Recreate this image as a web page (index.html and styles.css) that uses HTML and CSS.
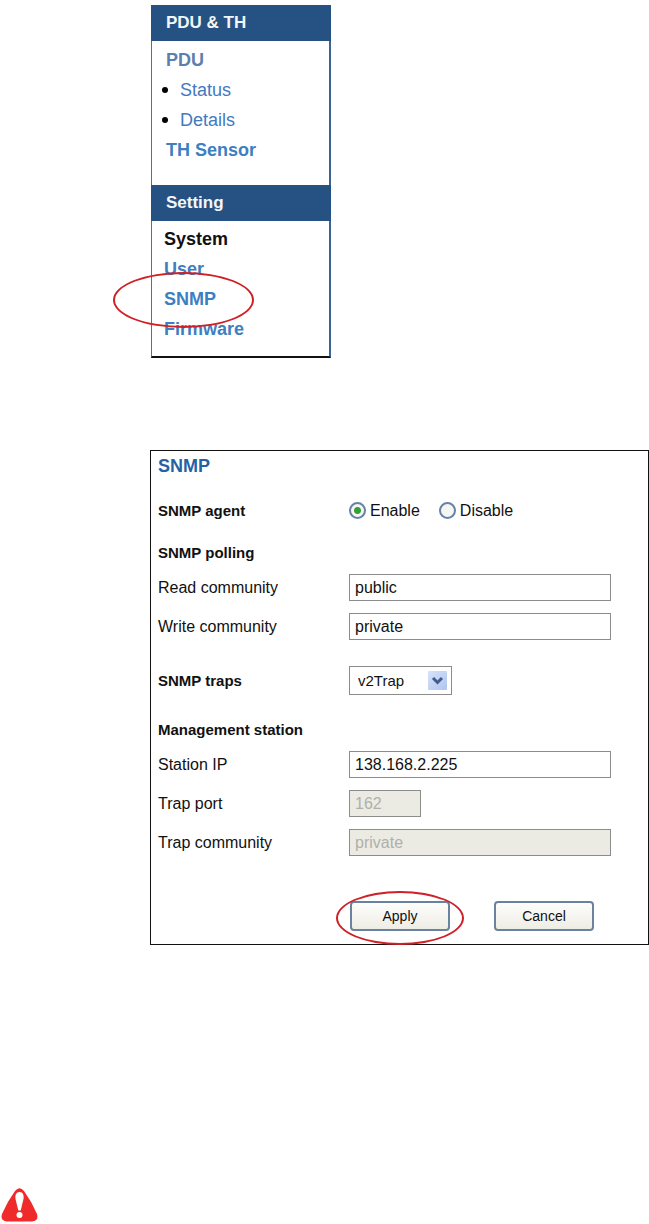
FILE: index.html
```html
<!DOCTYPE html>
<html lang="en">
<head>
    <meta charset="UTF-8">
    <meta name="viewport" content="width=device-width, initial-scale=1.0">
    <title>SNMP Setting</title>
    <link rel="stylesheet" href="styles.css">
</head>
<body>
    <nav class="menu">
        <h2>PDU &amp; TH</h2>
        <ul class="menu-pdu">
            <li><a class="muted" href="#pdu">PDU</a></li>
            <li class="sub"><a href="#status">Status</a></li>
            <li class="sub"><a href="#details">Details</a></li>
            <li><a href="#th">TH Sensor</a></li>
        </ul>
        <h2>Setting</h2>
        <ul class="menu-setting">
            <li><a class="current" href="#system">System</a></li>
            <li><a href="#user">User</a></li>
            <li class="marked">
                <a href="#snmp">SNMP</a>
                <span class="ring"></span>
            </li>
            <li><a href="#firmware">Firmware</a></li>
        </ul>
    </nav>

    <form class="panel">
        <h1>SNMP</h1>
        <div class="row agent">
            <span class="name" id="agentLabel">SNMP agent</span>
            <div class="radios" role="radiogroup" aria-labelledby="agentLabel">
                <label><input type="radio" name="agent" value="enable" checked>Enable</label>
                <label><input type="radio" name="agent" value="disable">Disable</label>
            </div>
        </div>

        <h3 class="polling">SNMP polling</h3>
        <div class="row">
            <label for="read">Read community</label>
            <input type="text" id="read" name="read" value="public">
        </div>
        <div class="row">
            <label for="write">Write community</label>
            <input type="text" id="write" name="write" value="private">
        </div>

        <div class="row traps">
            <label class="name" for="traps">SNMP traps</label>
            <div class="select">
                <select id="traps" name="traps">
                    <option>v1Trap</option>
                    <option selected>v2Trap</option>
                </select>
                <svg viewBox="0 0 19 19" aria-hidden="true">
                    <defs>
                        <linearGradient id="arrowFill" x1="0" y1="0" x2="1" y2="1">
                            <stop offset="0" stop-color="#d6e2fa"/>
                            <stop offset="1" stop-color="#b0c5ee"/>
                        </linearGradient>
                    </defs>
                    <rect width="19" height="19" rx="1" fill="url(#arrowFill)"/>
                    <path d="M5 7l4.500 4.500L14 7" fill="none" stroke="#435a8c" stroke-width="3"/>
                </svg>
            </div>
        </div>

        <h3 class="station">Management station</h3>
        <div class="row">
            <label for="ip">Station IP</label>
            <input type="text" id="ip" name="ip" value="138.168.2.225">
        </div>
        <div class="row">
            <label for="port">Trap port</label>
            <input type="text" class="short" id="port" name="port" value="162" disabled>
        </div>
        <div class="row">
            <label for="community">Trap community</label>
            <input type="text" id="community" name="community" value="private" disabled>
        </div>

        <div class="buttons">
            <div class="marked">
                <button type="submit">Apply</button>
                <span class="ring"></span>
            </div>
            <button type="reset">Cancel</button>
        </div>
    </form>

    <svg class="warning" viewBox="0 0 37 34" role="img" aria-label="Warning">
        <path d="M14 3Q18.500-2.500 23 3Q31 14 36 26Q38 33 31 33.500H6Q-1 33 1 26Q6 14 14 3Z" fill="#ee2a2b"/>
        <path d="M18.500 4C22 4 23 7 22.500 11L19.700 22.500H17.300L14.500 11C14 7 15 4 18.500 4Z" fill="#fff"/>
        <circle cx="18.500" cy="27" r="3" fill="#fff"/>
    </svg>
</body>
</html>
```
FILE: styles.css
```css
* {
    box-sizing: border-box;
}
body {
    margin: 0;
    padding-top: 5px;
    background-color: #fff;
    color: #111;
    font-family: "Liberation Sans", Arial, sans-serif;
    font-size: 16px;
}
h1, h2, h3, ul {
    margin: 0;
    padding: 0;
}

/* side menu */
.menu {
    width: 180px;
    margin-left: 151px;
    border-left: 1px solid #4a72a3;
    border-right: 2px solid #3a6496;
    border-bottom: 2px solid #111;
}
.menu h2 {
    margin: 0 -2px 0 -1px;
    padding-left: 15px;
    background-color: #255283;
    color: #f4f6f8;
    font-size: 17px;
    line-height: 36px;
}
.menu ul {
    list-style: none;
    font-size: 18px;
    font-weight: bold;
    line-height: 30px;
}
.menu .menu-pdu {
    padding: 4px 0 20px 14px;
}
.menu .menu-setting {
    padding: 3px 0 12px 12px;
}
.menu a {
    color: #3c80c2;
    text-decoration: none;
}
.menu a.muted {
    color: #5c7eb0;
}
.menu a.current {
    color: #111;
}
.menu .sub {
    display: flex;
    align-items: center;
    gap: 12px;
    margin-left: -4px;
    font-weight: normal;
}
.menu .sub::before {
    content: "";
    width: 6px;
    height: 6px;
    border-radius: 50%;
    background-color: #000;
}
.menu .sub a {
    color: #4479be;
}

/* red outline round an item */
.marked {
    position: relative;
}
.ring {
    position: absolute;
    border: 2px solid #cf2027;
    border-radius: 50%;
    pointer-events: none;
}
.menu .ring {
    top: -12px;
    left: -51px;
    width: 141px;
    height: 56px;
}
.buttons .ring {
    top: -10px;
    right: -14px;
    bottom: -14px;
    left: -14px;
}

/* settings form */
.panel {
    margin: 92px 0 0 150px;
    padding: 5px 7px 13px;
    border: 1px solid #111;
}
.panel h1 {
    color: #2462a5;
    font-size: 18px;
    line-height: 20px;
}
.panel h3 {
    margin-bottom: 5px;
    font-size: 15px;
    line-height: 20px;
}
.panel .polling {
    margin-top: 13px;
}
.panel .station {
    margin-top: 20px;
}
.row {
    display: grid;
    grid-template-columns: 191px 1fr;
    align-items: center;
    min-height: 39px;
}
.row .name {
    font-size: 15px;
    font-weight: bold;
}
.agent, .traps {
    margin-top: 15px;
}
.radios {
    display: flex;
    gap: 19px;
}
.radios label {
    display: flex;
    align-items: center;
    gap: 4px;
}
input[type="radio"] {
    appearance: none;
    width: 17px;
    height: 17px;
    margin: 0;
    border: 2px solid #6683a6;
    border-radius: 50%;
    background-color: #f5f5f2;
}
input[type="radio"]:checked {
    background-image: radial-gradient(circle, #31a137 3px, #f5f5f2 4px);
}
input[type="text"] {
    width: 100%;
    max-width: 262px;
    height: 27px;
    padding: 0 5px;
    border: 1px solid #8c8c8c;
    background-color: #fff;
    color: #111;
    font: inherit;
}
input[type="text"].short {
    width: 72px;
}
input[type="text"]:disabled {
    background-color: #ebebe4;
    color: #b0b0a8;
}
.select {
    position: relative;
    width: 103px;
}
.select select {
    appearance: none;
    width: 100%;
    height: 29px;
    padding: 0 24px 0 8px;
    border: 1px solid #8c8c8c;
    border-radius: 0;
    background-color: #fff;
    color: #111;
    font: inherit;
    font-size: 15px;
}
.select svg {
    position: absolute;
    top: 5px;
    right: 5px;
    width: 19px;
    height: 19px;
    pointer-events: none;
}
.buttons {
    display: flex;
    gap: 44px;
    margin: 39px 0 0 192px;
}
button {
    display: block;
    width: 100px;
    height: 30px;
    padding: 0;
    border: 2px solid #6a829f;
    border-radius: 4px;
    background: linear-gradient(#fdfdfb, #eeede5);
    color: #111;
    font-family: inherit;
    font-size: 14px;
}

.warning {
    display: block;
    width: 37px;
    height: 34px;
    margin: 243px 0 0 1px;
}
```
